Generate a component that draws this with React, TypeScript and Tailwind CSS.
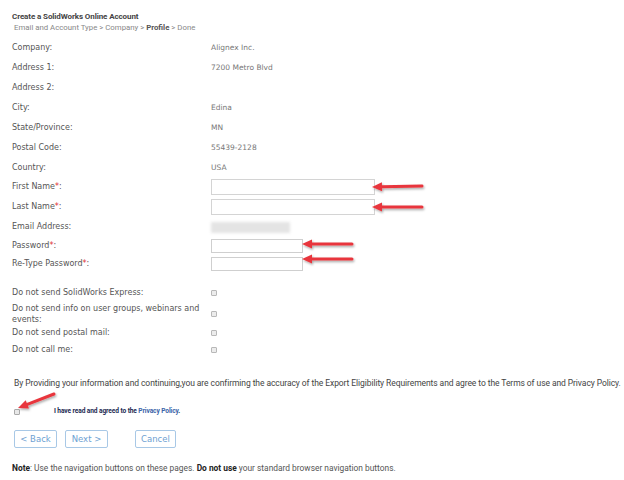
import React from "react";

const label = "text-[8px] text-[#555]";
const value = "text-[7.5px] text-[#777]";

function Row({ h, name, req, children }: { h: number; name: string; req?: boolean; children?: React.ReactNode }) {
  return (
    <div className="flex items-center" style={{ height: h }}>
      <div className={`${label} w-[199px]`}>
        {name}
        {req && <span className="text-[#e03030]">*</span>}
        :
      </div>
      <div className="flex items-center">{children}</div>
    </div>
  );
}

function Box({ w }: { w: number }) {
  return <div className="h-[16px] border border-[#d4d4d4] bg-white" style={{ width: w }} />;
}

function Check() {
  return <span className="block w-[6px] h-[6px] border border-[#b8b8b8] bg-[#ececec] rounded-[1px]" />;
}

function Arrow({ x1, y1, x2, y2 }: { x1: number; y1: number; x2: number; y2: number }) {
  const a = Math.atan2(y2 - y1, x2 - x1);
  const L = 10;
  const W = 4.5;
  const bx = x2 - L * Math.cos(a);
  const by = y2 - L * Math.sin(a);
  const px = -Math.sin(a) * W;
  const py = Math.cos(a) * W;
  return (
    <g>
      <line x1={x1} y1={y1} x2={bx} y2={by} stroke="#e8363c" strokeWidth="3" strokeLinecap="round" />
      <polygon points={`${x2},${y2} ${bx + px},${by + py} ${bx - px},${by - py}`} fill="#e8363c" />
    </g>
  );
}

export default function App() {
  return (
    <div className="relative w-[624px] h-[480px] bg-white overflow-hidden" style={{ fontFamily: "'DejaVu Sans', Verdana, sans-serif" }}>
      <div className="pl-[12px] pt-[12px]">
        <div className="text-[8px] font-bold text-[#444] leading-[10px] tracking-[-0.1px]" style={{ fontFamily: "Roboto, Arial, sans-serif" }}>
          Create a SolidWorks Online Account
        </div>
        <div className="pl-[2px] text-[7.8px] text-[#888] leading-[12px]" style={{ fontFamily: "Roboto, Arial, sans-serif" }}>
          Email and Account Type &gt; Company &gt; <span className="font-bold text-[#555]">Profile</span> &gt; Done
        </div>

        <div className="mt-[4px]">
          <Row h={20} name="Company"><span className={value}>Alignex Inc.</span></Row>
          <Row h={20} name="Address 1"><span className={value}>7200 Metro Blvd</span></Row>
          <Row h={20} name="Address 2" />
          <Row h={20} name="City"><span className={value}>Edina</span></Row>
          <Row h={20} name="State/Province"><span className={value}>MN</span></Row>
          <Row h={20} name="Postal Code"><span className={value}>55439-2128</span></Row>
          <Row h={19} name="Country"><span className={value}>USA</span></Row>
          <Row h={20} name="First Name" req><Box w={164} /></Row>
          <Row h={20} name="Last Name" req><Box w={164} /></Row>
          <Row h={20} name="Email Address">
            <div className="w-[79px] h-[11px] bg-[#e4e4e4] blur-[1.5px]" />
          </Row>
          <Row h={18} name="Password" req><div className="h-[14px] w-[92px] border border-[#cfcfcf]" /></Row>
          <Row h={17} name="Re-Type Password" req><div className="h-[14px] w-[92px] border border-[#cfcfcf]" /></Row>

          <div className="h-[13px]" />
          <Row h={16} name="Do not send SolidWorks Express"><Check /></Row>
          <div className="flex items-center h-[25px]">
            <div className={`${label} w-[199px] leading-[11px] pr-[8px]`}>
              Do not send info on user groups, webinars and events:
            </div>
            <Check />
          </div>
          <Row h={14} name="Do not send postal mail"><Check /></Row>
          <Row h={20} name="Do not call me"><Check /></Row>
        </div>

        <div className="mt-[17px] pl-[2px] text-[8.5px] leading-[12px] text-[#444] tracking-[-0.08px] whitespace-nowrap" style={{ fontFamily: "Roboto, Arial, sans-serif" }}>
          By Providing your information and continuing,you are confirming the accuracy of the Export Eligibility Requirements and agree to the Terms of use and Privacy Policy.
        </div>

        <div className="mt-[18px] flex items-center pl-[2px]">
          <span className="block w-[6px] h-[6px] border border-[#aaa] bg-[#e8e8e8] rounded-[1px]" />
          <span className="ml-[34px] text-[6.6px] font-bold text-[#1c2a52] tracking-[-0.1px]" style={{ fontFamily: "Roboto, Arial, sans-serif" }}>
            I have read and agreed to the <span className="text-[#3a64a8]">Privacy Policy</span>.
          </span>
        </div>

        <div className="mt-[13px] flex items-center pl-[2px]">
          <button className="w-[43px] h-[18px] border border-[#a8c8e6] rounded-[2px] text-[8.5px] text-[#6e9fd2]">&lt; Back</button>
          <button className="ml-[8px] w-[43px] h-[18px] border border-[#a8c8e6] rounded-[2px] text-[8.5px] text-[#6e9fd2]">Next &gt;</button>
          <button className="ml-[27px] w-[41px] h-[18px] border border-[#a8c8e6] rounded-[2px] text-[8.5px] text-[#6e9fd2]">Cancel</button>
        </div>

        <div className="mt-[14px] text-[8.4px] text-[#555]" style={{ fontFamily: "Roboto, Arial, sans-serif" }}>
          <span className="font-bold text-[#222]">Note</span>: Use the navigation buttons on these pages. <span className="font-bold text-[#222]">Do not use</span> your standard browser navigation buttons.
        </div>
      </div>

      <svg className="absolute inset-0 pointer-events-none" width="624" height="480">
        <defs>
          <filter id="sh" x="-20%" y="-50%" width="140%" height="200%">
            <feDropShadow dx="1" dy="1.5" stdDeviation="1.2" floodColor="#000" floodOpacity="0.35" />
          </filter>
        </defs>
        <g filter="url(#sh)">
          <Arrow x1={422} y1={186} x2={372} y2={187} />
          <Arrow x1={422} y1={207} x2={372} y2={207} />
          <Arrow x1={352} y1={244} x2={302} y2={244} />
          <Arrow x1={352} y1={259} x2={302} y2={259} />
          <Arrow x1={54} y1={394} x2={18} y2={408} />
        </g>
      </svg>
    </div>
  );
}
